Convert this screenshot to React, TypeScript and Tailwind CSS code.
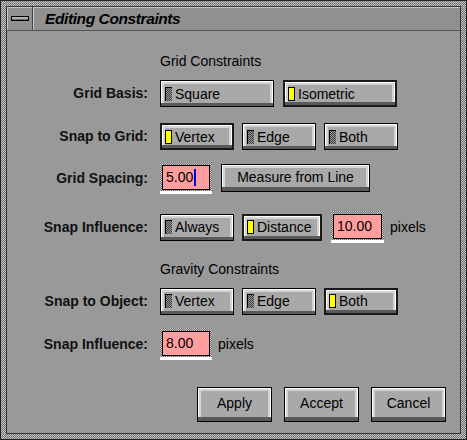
import React from 'react';

const dither =
  'bg-[image:repeating-conic-gradient(#6e6e6e_0%_25%,#c6c6c6_0%_50%)] bg-size-[2px_2px]';

const darkDither =
  'bg-[image:repeating-conic-gradient(#3c3c3c_0%_25%,#9a9a9a_0%_50%)] bg-size-[2px_2px]';

const bevel =
  'shadow-[inset_0_-3px_0_#5a5a5a,inset_1px_1px_0_#ffffff,inset_-1px_0_0_#ffffff,inset_3px_3px_0_#d4d4d4,inset_-3px_0_0_#d4d4d4]';

function Toggle({ label, on, w }: { label: string; on?: boolean; w: string }) {
  return (
    <div
      className={`${w} h-[27px] flex items-center bg-[#a9a9a9] ${bevel} ${
        on ? 'border-2 border-[#1a1a1a] pl-[3px]' : 'border border-black pl-[4px]'
      }`}
    >
      {on ? (
        <span className="w-[7px] h-[14px] border border-black bg-[#ffff00]" />
      ) : (
        <span className={`w-[7px] h-[14px] border-l border-t border-black ${darkDither}`} />
      )}
      <span className="ml-[3px] text-[14px] leading-none text-black">{label}</span>
    </div>
  );
}

function PushButton({ label, w, h }: { label: string; w: string; h: string }) {
  return (
    <div
      className={`${w} ${h} flex items-center justify-center border border-black bg-[#a9a9a9] text-[14px] text-black shadow-[inset_0_-4px_0_#5a5a5a,inset_1px_1px_0_#ffffff,inset_-1px_0_0_#ffffff,inset_3px_3px_0_#d4d4d4,inset_-3px_0_0_#d4d4d4]`}
    >
      <span className="-mt-[2px]">{label}</span>
    </div>
  );
}

function Field({ value, w, cursor }: { value: string; w: string; cursor?: boolean }) {
  return (
    <div className={`${w} pt-[3px] px-[2px] pb-[1px] border-b-[3px] border-white ${dither}`}>
      <div className="h-[25px] border border-black bg-[#ff9e9e] flex items-center pl-[3px] text-[14px] text-black">
        {value}
        {cursor && <span className="ml-[1px] w-[2px] h-[17px] bg-[#0000ff]" />}
      </div>
    </div>
  );
}

function Label({ children }: { children: React.ReactNode }) {
  return (
    <div className="w-[141px] shrink-0 text-right font-bold text-[14px] text-[#111]">{children}</div>
  );
}

export default function App() {
  return (
    <div className="w-[467px] h-[440px] font-['Liberation_Sans',Arial,sans-serif]">
      <div className={`w-full h-full border border-[#222] p-[5px] ${dither}`}>
        <div className="w-full h-full border border-[#333] bg-[#999999] flex flex-col">
          {/* title bar */}
          <div className="h-[24px] shrink-0 flex bg-[#909090] border-b border-[#555]">
            <div className="w-[26px] flex items-center justify-center border-r border-[#444] shadow-[inset_1px_1px_0_#c8c8c8]">
              <div className="w-[18px] h-[5px] border border-black bg-[#b0b0b0] shadow-[inset_0_-1px_0_#666]" />
            </div>
            <div className="flex-1 flex items-center pl-[12px] shadow-[inset_1px_1px_0_#c8c8c8]">
              <span className="italic font-bold text-[15.5px] tracking-[-0.4px] text-black">
                Editing Constraints
              </span>
            </div>
          </div>

          {/* content */}
          <div className="flex flex-col text-[14px] text-black">
            <div className="mt-[22px] pl-[153px] h-[16px] leading-[16px]">Grid Constraints</div>

            <div className="mt-[11px] h-[27px] flex items-center">
              <Label>Grid Basis:</Label>
              <div className="ml-[12px] flex gap-[9px]">
                <Toggle label="Square" w="w-[114px]" />
                <Toggle label="Isometric" w="w-[114px]" on />
              </div>
            </div>

            <div className="mt-[16px] h-[27px] flex items-center">
              <Label>Snap to Grid:</Label>
              <div className="ml-[12px] flex gap-[8px]">
                <Toggle label="Vertex" w="w-[74px]" on />
                <Toggle label="Edge" w="w-[74px]" />
                <Toggle label="Both" w="w-[74px]" />
              </div>
            </div>

            <div className="mt-[12px] h-[32px] flex items-center">
              <Label>Grid Spacing:</Label>
              <div className="ml-[12px] flex items-center gap-[9px]">
                <Field value="5.00" w="w-[52px]" cursor />
                <PushButton label="Measure from Line" w="w-[149px]" h="h-[28px]" />
              </div>
            </div>

            <div className="mt-[17px] h-[32px] flex items-center">
              <Label>Snap Influence:</Label>
              <div className="ml-[12px] flex items-center gap-[8px]">
                <Toggle label="Always" w="w-[74px]" />
                <Toggle label="Distance" w="w-[80px]" on />
                <div className="ml-[1px]">
                  <Field value="10.00" w="w-[53px]" />
                </div>
                <span className="-ml-[2px]">pixels</span>
              </div>
            </div>

            <div className="mt-[18px] pl-[153px] h-[16px] leading-[16px]">Gravity Constraints</div>

            <div className="mt-[10px] h-[28px] flex items-center">
              <Label>Snap to Object:</Label>
              <div className="ml-[12px] flex gap-[8px]">
                <Toggle label="Vertex" w="w-[74px]" />
                <Toggle label="Edge" w="w-[74px]" />
                <Toggle label="Both" w="w-[74px]" on />
              </div>
            </div>

            <div className="mt-[13px] h-[32px] flex items-center">
              <Label>Snap Influence:</Label>
              <div className="ml-[12px] flex items-center gap-[6px]">
                <Field value="8.00" w="w-[52px]" />
                <span>pixels</span>
              </div>
            </div>

            <div className="mt-[27px] pr-[14px] flex justify-end gap-[12px]">
              <PushButton label="Apply" w="w-[75px]" h="h-[35px]" />
              <PushButton label="Accept" w="w-[75px]" h="h-[35px]" />
              <PushButton label="Cancel" w="w-[75px]" h="h-[35px]" />
            </div>
          </div>
        </div>
      </div>
    </div>
  );
}
